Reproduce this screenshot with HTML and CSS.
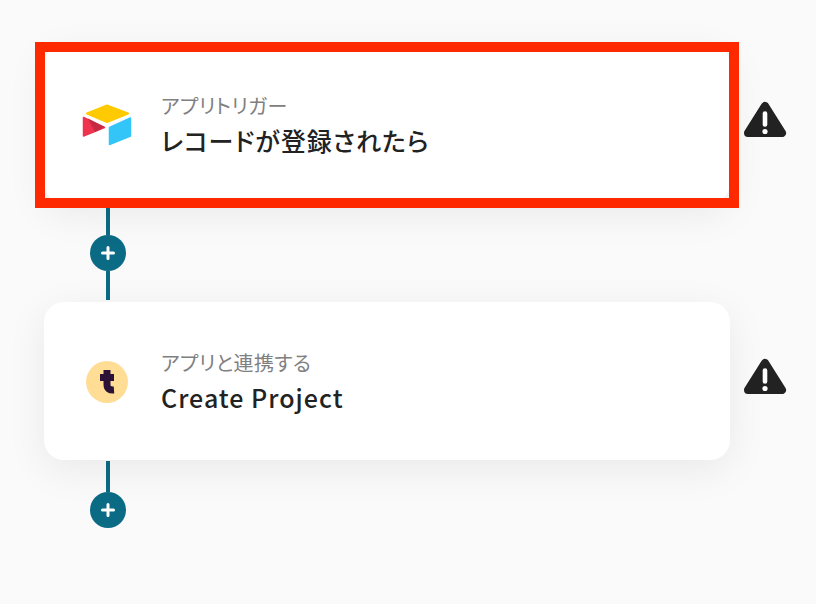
FILE: index.html
```html
<!DOCTYPE html>
<html lang="ja">
<head>
    <meta charset="UTF-8">
    <title>フロー</title>
    <link rel="stylesheet" href="styles.css">
</head>
<body>
    <div class="flow">
        <div class="step">
            <div class="card">
                <div class="highlight"></div>
                <svg class="app-icon" viewBox="0 0 50 50" width="50" height="50">
                    <path d="M5 13.5 25 5.5 46 13.5 25 22Z" fill="#ffca00" stroke="#ffca00" stroke-width="2" stroke-linejoin="round"/>
                    <path d="M27.5 27.5 48.5 18V36L27.5 44.5Z" fill="#33c5f8" stroke="#33c5f8" stroke-width="1.5" stroke-linejoin="round"/>
                    <path d="M1.5 17.5 22.5 27.5 1.5 36Z" fill="#ef324e" stroke="#ef324e" stroke-width="1.5" stroke-linejoin="round"/>
                    <path d="M6 18.5 22.5 27 13 32Z" fill="#c52a42"/>
                </svg>
                <div class="card-text">
                    <div class="label">アプリトリガー</div>
                    <div class="title">レコードが登録されたら</div>
                </div>
            </div>
            <svg class="warn" viewBox="0 0 44 40" width="44" height="40">
                <path d="M22 6 39 33H5Z" fill="#222" stroke="#222" stroke-width="8" stroke-linejoin="round"/>
                <path d="M22 13.5V24.5" stroke="#fff" stroke-width="4.6" stroke-linecap="round"/>
                <circle cx="22" cy="31.5" r="2.6" fill="#fff"/>
            </svg>
        </div>

        <div class="connector">
            <div class="line line-top"></div>
            <div class="add">
                <svg viewBox="0 0 14 14" width="14" height="14">
                    <path d="M7 1.5V12.5M1.5 7H12.5" stroke="#fff" stroke-width="3" stroke-linecap="round"/>
                </svg>
            </div>
            <div class="line line-bottom"></div>
        </div>

        <div class="step">
            <div class="card">
                <svg class="app-icon" viewBox="0 0 50 50" width="50" height="50">
                    <circle cx="25" cy="25" r="21" fill="#ffdd95"/>
                    <path d="M25 13V27.5Q25 33.5 32 33M18 20.5H32" fill="none" stroke="#2b1338" stroke-width="7"/>
                </svg>
                <div class="card-text">
                    <div class="label">アプリと連携する</div>
                    <div class="title">Create Project</div>
                </div>
            </div>
            <svg class="warn" viewBox="0 0 44 40" width="44" height="40">
                <path d="M22 6 39 33H5Z" fill="#222" stroke="#222" stroke-width="8" stroke-linejoin="round"/>
                <path d="M22 13.5V24.5" stroke="#fff" stroke-width="4.6" stroke-linecap="round"/>
                <circle cx="22" cy="31.5" r="2.6" fill="#fff"/>
            </svg>
        </div>

        <div class="connector">
            <div class="line line-top"></div>
            <div class="add">
                <svg viewBox="0 0 14 14" width="14" height="14">
                    <path d="M7 1.5V12.5M1.5 7H12.5" stroke="#fff" stroke-width="3" stroke-linecap="round"/>
                </svg>
            </div>
        </div>
    </div>
</body>
</html>
```

FILE: styles.css
```css
body {
    margin: 0;
    height: 604px;
    overflow: hidden;
    background: #fafafa;
    font-family: "Noto Sans CJK JP", "Noto Sans", sans-serif;
    font-feature-settings: "palt";
    color: #222;
}
.flow {
    display: flex;
    flex-direction: column;
    padding: 45px 0 0 44px;
}
.step {
    display: flex;
    align-items: center;
    gap: 13px;
}
.card {
    position: relative;
    display: flex;
    align-items: center;
    box-sizing: border-box;
    width: 686px;
    height: 158px;
    padding-left: 38px;
    gap: 29px;
    background: #fff;
    border-radius: 20px;
    box-shadow: 0 10px 40px rgba(0, 0, 0, 0.07);
}
.highlight {
    position: absolute;
    top: -3px;
    right: -9px;
    bottom: -5px;
    left: -9px;
    border: 10px solid #ff2900;
}
.card-text {
    display: flex;
    flex-direction: column;
    gap: 3px;
    margin-top: 3px;
}
.label {
    font-size: 20px;
    line-height: 26px;
    letter-spacing: 0.4px;
    color: #808080;
}
.title {
    font-size: 25px;
    line-height: 36px;
    font-weight: 500;
    letter-spacing: 1px;
}
.app-icon {
    position: relative;
    top: 1px;
}
.warn {
    margin-bottom: 9px;
}
.connector {
    display: flex;
    flex-direction: column;
    align-items: center;
    width: 36px;
    height: 99px;
    margin-left: 46px;
    padding-top: 1px;
    box-sizing: border-box;
}
.line {
    width: 4px;
    background: #0b6b85;
}
.line-top {
    height: 31px;
}
.line-bottom {
    height: 29px;
}
.add {
    display: flex;
    align-items: center;
    justify-content: center;
    flex-shrink: 0;
    width: 36px;
    height: 36px;
    border-radius: 50%;
    background: #0b6b85;
}
```
